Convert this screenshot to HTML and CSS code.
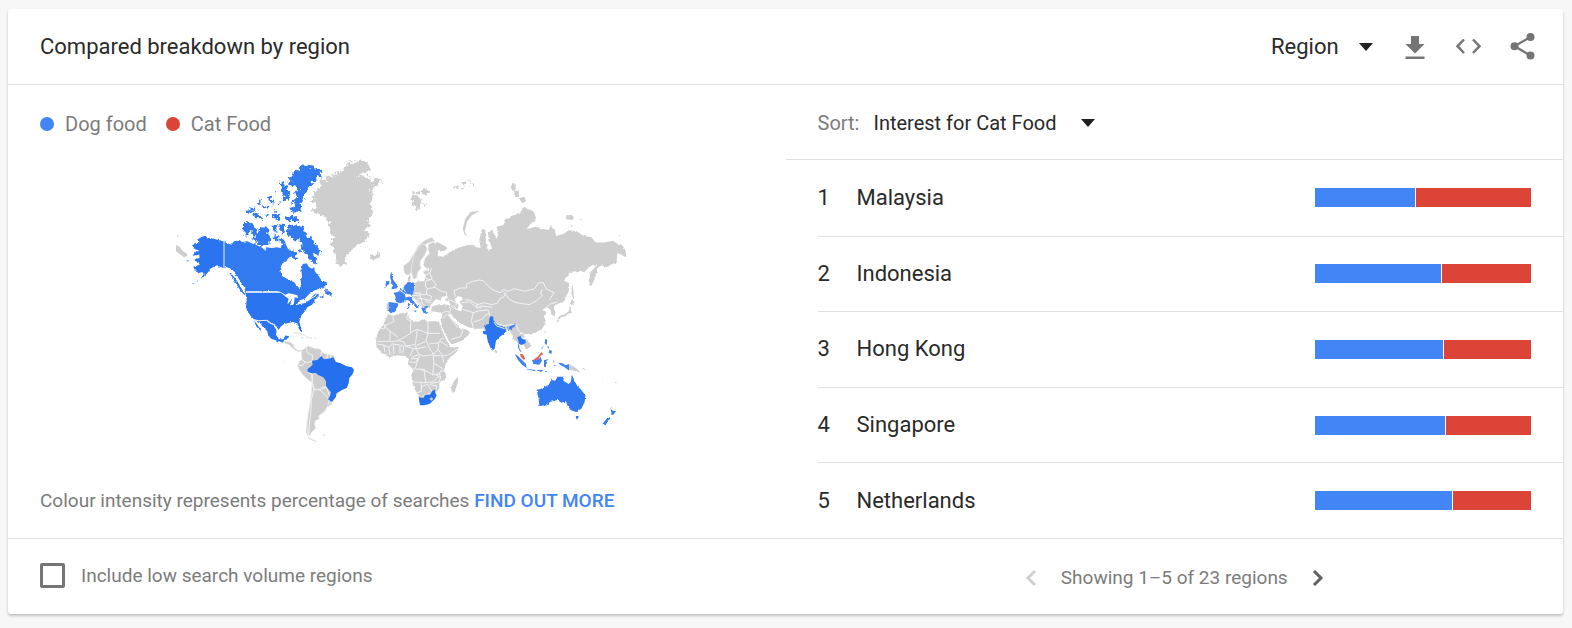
FILE: index.html
```html
<!DOCTYPE html>
<html lang="en-GB">
<head>
<meta charset="utf-8">
<meta name="viewport" content="width=device-width, initial-scale=1">
<title>Compared breakdown by region</title>
<link rel="stylesheet" href="styles.css">
</head>
<body>
<main class="card">
  <header class="card-header">
    <h1 class="title">Compared breakdown by region</h1>
    <div class="tools">
      <span class="picker picker-region">
        <select class="select" aria-label="Resolution"><option>Region</option></select>
        <svg class="caret" viewBox="0 0 14 8" aria-hidden="true"><path d="M0 0h14L7 8z"/></svg>
      </span>
      <button class="icon-button" type="button" aria-label="Download CSV"><svg viewBox="0 0 32 32"><path d="M12 5h8v8h5.500L16 22.500 6.500 13H12zM6.500 25.500h19V28h-19z"/></svg></button>
      <button class="icon-button" type="button" aria-label="Embed"><svg viewBox="0 0 32 32"><path class="line" d="M11 8.500 4.500 15.200 11 22M20 8.500l6.500 6.700L20 22"/></svg></button>
      <button class="icon-button" type="button" aria-label="Share"><svg viewBox="0 0 32 32"><path class="wire" d="M23.500 6 7.500 15.200l16 9.300"/><circle cx="23.500" cy="6" r="4"/><circle cx="7.500" cy="15.200" r="4"/><circle cx="23.500" cy="24.500" r="4"/></svg></button>
    </div>
  </header>

  <div class="content">
    <section class="map-panel">
      <ul class="legend">
        <li class="legend-item"><span class="dot dog"></span>Dog food</li>
        <li class="legend-item"><span class="dot cat"></span>Cat Food</li>
      </ul>
      <svg class="map" viewBox="170 155 462 290" role="img" aria-label="World map of interest by region">
        <defs>
          <filter id="rough" x="-5%" y="-5%" width="110%" height="110%" color-interpolation-filters="sRGB">
            <feTurbulence type="fractalNoise" baseFrequency="0.09" numOctaves="2" seed="4" result="n"/>
            <feDisplacementMap in="SourceGraphic" in2="n" scale="24" xChannelSelector="R" yChannelSelector="G"/>
          </filter>
          <filter id="coast" x="-5%" y="-5%" width="110%" height="110%" color-interpolation-filters="sRGB">
            <feTurbulence type="fractalNoise" baseFrequency="0.1" numOctaves="2" seed="7" result="n"/>
            <feDisplacementMap in="SourceGraphic" in2="n" scale="8" xChannelSelector="R" yChannelSelector="G"/>
          </filter>
        </defs>

        <!-- Greenland, Iceland, Svalbard, Scandinavia -->
        <g transform="translate(300 150) scale(.33333)" class="none">
          <g filter="url(#rough)">
            <path d="M24 156L44 146 34 138 50 124 60 104 66 84 76 94 84 78 98 82 96 70 110 80 104 62 122 76 118 58 132 68 130 50 150 38 170 30 192 34 208 46 212 62 186 68 172 80 196 76 206 88 214 78 212 100 226 84 246 88 240 102 222 110 214 122 220 140 212 160 220 180 214 196 204 212 208 228 194 236 206 250 200 270 184 280 166 290 148 306 138 322 130 350 116 350 106 330 102 300 94 280 98 258 92 244 84 214 70 194 44 190 30 182 46 176 54 162z"/>
            <path d="M206 312l10 8 8-8 12-4 4 12-14 10-14-6z"/>
            <path d="M332 130l14 4 6-8 6 14 6 14-10 28-8-14-10-18zM362 122l16-6 12 8-12 12-12-4zM370 158l8 10-6 2zM460 110l10-4 4 6-8 4zM484 100l10-6 8 2-6 8zM508 100l14 0-6 8zM482 114l12 2-8 4zM506 84l4 4-4 4z"/>
          </g>
          <path d="M540 182l-24 14-14 18-8 30 6 14 14 14-8-8-12-10-6-18 8-30 16-20z"/>
          <path class="edge" d="M310 348l18-14 16-28 12-20 20-16 20-8 8 12-10 2-12 4-12 8-14 22-10 22-6 20-8 18-12 6-8-10z"/>
          <path class="edge" d="M376 284l6 14-8 18-12 16-2 14 4 8-10 12-4 18-10 4-6-20 0-16 10-42 12-18 10-10z"/>
          <path class="edge" d="M386 282l14-6 4 24 4 28-8 20-20 8-10-10 4-20 14-16-4-14z"/>
        </g>

        <!-- Alaska, Canada and the Arctic islands -->
        <g transform="translate(160 150) scale(.33333)" class="canada">
          <path class="none" d="M48 284l12 8 8 12 12 6 2 8-10 4-10-8-14-10zM50 256l6 2-4 4z"/>
          <g filter="url(#rough)">
            <path d="M384 88L396 72 412 58 436 46 460 50 484 68 474 84 456 100 440 120 432 140 424 166 420 186 402 184 388 176 406 168 398 152 412 144 402 130 420 118 396 108 382 98 398 92z"/>
            <path d="M362 94l14 10 6 14 8 14-4 18-14 4-2-18-8-14zM372 198l18 4 22-4 6 14-34 2zM388 184l16-2-4 8z"/>
            <path d="M382 228l18-4 28 8 8 20 20 14 10 18 14 16-4 14-16-2 12 22-8 8-20-20-6-20-14 4-4-12 8-12-12-14-12 0-12-4-12-12z"/>
            <path d="M276 234l16 8 14-10 18 2 2 22 8 12-10 18-24-6-20-4-4-10 12-6-10-10z"/>
            <path d="M252 216l26 4 2 14-16 18-14 2 2-18z"/>
            <path d="M338 226l14 0 0 20-12-2zM358 222l16 4-4 26-12-10zM340 252l14 8 2 14-14-4zM260 184l12-8 12-4-6 12-16 10zM282 188l16 6 10 12-22 2-8-12zM292 156l14-8-4 14zM324 140l10 4 10 14-6 8-12-12zM342 176l10 8-8 6zM350 158l10-4-4 12zM342 192l16 4-2 18-14-6zM308 172l10-6 2 12zM344 122l4 6-4 4zM318 190l10 4-6 8zM378 292l10 0 0 12zM428 296l14 8 2 12-14-8z"/>
            <path d="M396 296l16 12-4 16-14 2z"/>
          </g>
          <g filter="url(#coast)">
            <path class="usa" d="M96 285l12-3 10-4-6-10 12-6 10-5 12 7 14 2 16 4 20 5v80l-13-3-12-6-12 6-10 6-6 10-10 10-12 10 10-16-4-6-12 4-10-14-6-6 20-6-4-8-14-4 6-6 12-2-2-10-18 4 8-12 12-4-14-4z"/>
            <path class="usa" d="M94 402l10-4-2 3zM108 394l10-4-4 5zM78 330l10 2-4 2zM142 362l8-4-2 8z"/>
            <path d="M191 275l23 9 8-10 16-4 8 6 16-2 18 8 16 6 12 6 8 10 4-12 14 2 16-2 12 2 4-12-8-6 6-12 10 8 4 12 6 12 6 8 10-2 4 12-14 6-10 10-14 12-6 16 6 20 18 10 18 8 6 8 8 14 8-14-6-12 8-14-2-18 4-18 12-2 6 10 10 6 6-4 4 14 10 12 8 12 18 8-8 12-14 4-16 8-16 10-14 14-30 10-28-20-14-10-10-2H258l-6-14-10-14-12-20-18-20-20-7z"/>
            <path d="M496 414l8 8 12 6-2 10-18-6zM456 440l12-10 10 4-12 12-12 8-6-2zM480 442l12-6-4 8zM208 368l6 2 18 24 12 20 10 18-4 0-14-18-12-20zM486 412l10-2-8 6z"/>
          </g>
          <path class="border" d="M192 272v84"/>
        </g>

        <!-- USA, Mexico, Central and South America -->
        <g transform="translate(220 280) scale(.33333)">
          <g filter="url(#coast)">
            <path class="usa" d="M76 36h106l12 10 10-4 12 0 6 10-8 10-4 14 10-2 4-18 12 2 4 8-8 8 20-4 18-10 10-4 4 8-8 10-14 8-6 10-8 10-8 16-2 8 6 20-2 10-8-16-2-10-14-4-16 4-10 2-10 8-6 10-10-16-12-4-8-8-28 2-14-4-10-10-12-16-4-12 2-24z"/>
            <path class="usa" d="M116 122l24-2 10 8 10 6 10 18-2 12 8 14 12 0 8-10 12-4-4 14-12 2-2 8-16-4-20-8-10-10-2-12-14-14zM102 120l10 14 14 20-4-2-14-14z"/>
          </g>
          <path class="border" d="M78 37h104l12 8M228 74l34-12 24-14 8-16 14 0M98 118l16 4 28-1 8 9 12 3 8 14"/>
          <path class="lake" d="M192 46l14-6 12 2 14 4 2 8-10-2-2 18-6 4 0-18-10 14-4 2 4-16-12-8zM234 66l16-4-6 6-10 4z"/>
          <path class="lake" d="M226 0l6 18 10 4 0-22z"/>
          <g class="none">
            <path class="edge" d="M194 182l18 5 9 7 2 9 13 9 10-4 0 5-12 3-16-11-10-10-15-6z"/>
            <path class="faint" d="M222 158l16 1 16 8M258 170l18 5M284 174l4 1M242 172l8 2M192 245l2 1M308 466l8-2"/>
            <path class="edge" d="M244 212l14-10 8-4 14 6 20 3 9 11 11 4 20 4 4 10-8 20-20 30 5 20 10 20 4 40 0 8-13 6-6 12-12 10-8 6 2 10-12 4-2 12 4 10-12 12-6 12-8-6 0-32 2-26 6-34 4-30 2-32-14-10-14-14-12-18-4-10 6-12 8-6-2-10z"/>
            <path class="faint" d="M262 420l-2 36 6 18 16 8 8 2M262 440l-4 18M268 474l10 8"/>
            <path class="border" d="M258 202l4 16 16 8-2 18M246 240l14 8 18-4M234 254l12 4 10-12M264 278l12 4 2 22M276 282l0 24 8 24 20-2 18-8M276 306l6 22-8 30-2 40-4 40-2 30M296 328l22 18 10 14-4 14M306 210l-4 20M322 222l0 12M334 224l-4 12M302 324l16-4 10 26"/>
          </g>
          <path class="brazil" d="M262 268l8-6 8-8-2-12 16-2 12-12 8 10 14-2 14-4 8 14 14 4 16 8 18 4 6 8-4 12-10 12-2 16-6 14-14 6-16 10-2 10-12 16-12-8 6-10 2-12-8-10-6-8 0-14-8-12-14-6-10-8-10 2-12-4z"/>
        </g>

        <!-- Europe, Asia and Africa -->
        <g transform="translate(360 240) scale(.33333)">
          <g class="none">
            <g filter="url(#coast)">
              <path d="M222 6L240 10 260 22 258 32 240 34 230 30 234 48 250 50 264 40 280 30 300 22 320 16 336 14 350 22 362 24 358 0 366-34 376-30 378 10 384 30 396 26 388 0 384-20 396-30 404-14 416 0 410-40 430-44 436-64 460-74 478-78 492-100 504-92 522-86 528-64 508-44 500-32 526-40 550-34 566-30 572-42 584-32 588-12 610-18 628-30 650-26 672-12 696-8 706 8 740 6 760 2 776 14 788 18 798 34 798 52 780 42 772 40 770 68 756 72 740 82 724 76 712 84 710 100 700 126 692 140 686 120 692 96 714 72 696 76 676 92 650 94 630 96 612 122 628 130 626 154 610 186 592 192 580 202 586 216 584 228 574 224 572 210 562 202 546 210 560 216 552 228 558 246 546 268 526 278 506 282 490 286 510 308 512 320 500 328 490 314 480 300 474 290 476 316 470 304 462 300 454 280 446 268 436 272 420 284 384 290 370 266 350 266 324 262 296 246 284 236 270 222 250 226 244 218 216 214 214 200 240 192 272 196 266 184 254 180 264 168 246 170 242 182 232 178 222 182 216 192 208 204 198 208 192 200 184 202 172 184 160 172 156 160 160 130 176 124 194 124 198 106 190 98 196 92 208 90 206 80 218 70 212 40 214 14z"/>
              <path d="M458-172l8 4 2 16-10 6-6-12zM462-148l14 0 2 16-12 6zM480-126l14-4 4 14-10 6-6-6zM618-74l10 0 14 4-4 10-18-2zM656-64l8 2 2 4zM776-16l6 2-4 3zM632-44l6 2-4 3z"/>
              <path d="M636 130l4 20 2 28-4-2-4-24zM636 178l8 8-8 10-6-6zM632 198l2 18-14 12-18 4-10 8 6-12 18-6 10-8zM590 242l8-4-4 10zM554 270l4 10-4 0z"/>
              <path d="M84 222l14 6 24-8 22-2 2 16 8 6 22 6 10-8 20 6 30 0 4 8 10 28 12 26 8 16 26-2-6 16-22 18-12 20-4 18 6 10-2 14-18 14 0 14-14 16-34 20-12-6-10-20-10-22-4-28 6-14-12-14-4-20-8-8-28-2-18 6-20-10-20-20-2-16 4-28 16-22 10-20z"/>
              <path d="M248 222l16 0 18 22 18 18 10 4 16 6 2 10-18 18-36 14-12-20-16-32-4-22z"/>
              <path d="M294 410l0 16-10 30-10 2 0-18 8-16zM404 328l8 6-2 6-6-4zM80 190l7 0-1 24-6-2zM148 104l4 6-2 16-6-4 0-14z"/>
            </g>
            <path class="lake" d="M284 178l10-10 12 4 2 8-10 4 10 14-4 16-12-4 4-14-8-10z"/>
            <path class="border" d="M196 106l14-8 6-14M196 114l16 6 4-6-6-14M198 124l-2 14 6 8M194 124l22-6 12 16-8 10M202 146l24-4 14 10 20 6 0 12M162 132l-2 24 20 8 18 0 4-18M160 156l-6 16M180 164l4 12 28 6 2-10M172 176l14 0M184 176l4 18 12 6M196 184l16 4M166 160l18-2M160 166l20 2M200 162l16 8M170 180l10 8 4 14"/>
            <path class="border" d="M286 170l-4-18 18-8 20 0 0-12 18-8 22-4 12 4 12 14 18 14 20 6 8-10 14 6 18-8 32 8 30-8 12-18 14 0 8 18 24 12-14 22"/>
            <path class="border" d="M438 158l-6 12-12 6-8 14-18 4-20-6-22 6-22-14-16 0M430 154l18 24 20 10 40 6 22-12 18-16-6-4 4-14M306 188l24-2 22 18 14-6 30 4M352 190l-2 10 14 4M340 218l18-6 26-2 6 18M308 208l32 10-6 24 6 22M340 246l26-8 12-14 12-4M264 178l26 10-2 8M272 196l8 8 14 6M268 196l4 14-6 16 22 24M246 218l14-4 8 2M280 196l10 10M390 228l14 20 28 10 20-4 18 0 4 16 14 14M402 244l8 10 24 8M452 262l16-8M478 282l10-4 12 14 8 18M484 290l16 14"/>
            <path class="border" d="M262 222l-14 14M264 224l30 40M274 298l28-8 6-18M302 268l8 0M554 206l16-14 22-6"/>
            <path class="border" d="M98 230l4 14-28 14M74 252l0 14-20 0M74 260l40 32M90 272l0 32-38 0M144 220l-4 16 12 8 0 36-38 22-24 4M152 244l2-6M204 244l0 36-32-12-20 8M204 280l36 0M204 280l-6 24-28 12M172 270l-6 44-30 4-4-12-18-4M52 312l20 4 2 20M72 316l12 6 14-10 16 2 18 4-4 22M86 322l4 22M100 316l2 26M120 318l0 22M136 318l24 8-10 22M160 326l14 0 24-6M166 316l10 28-22 8M176 344l16 4 28-4M200 304l8 20 12 18M208 312l28-4 8-12 8 0M236 308l-2 22-14 12M240 304l24 14M234 330l16 18 16-4M266 344l24-16M220 344l2 26 26 16M222 346l26 2 2 20M222 370l-4 34-14-8-24-8-22-2M178 348l-12 36M176 388l18 0 0 20 4 20-38-2M194 428l22-2 22-16-16-8M184 430l0 24-14 4M186 440l16-8 16 26-22 6-10 6M218 404l20-2 6-12M212 430l26-4 4-16M210 434l20 4-4 18M244 392l14 2M154 356l22 0M148 366l18 2 8-12M230 408l8-10 4 18"/>
          </g>

          <g class="europe" filter="url(#coast)">
            <path d="M92 98l8 6-2 12 8 12 8 12-6 6-16 2 6-10-6-6 2-10-4-8zM78 124l10-2 0 14-12 4z"/>
            <path d="M100 158l14-2 8-10 16 12 0 10-2 18-16 4-12-4-2-18z"/>
            <path d="M86 186l30 4-4 12-8 14-12 4-6-6z"/>
            <path d="M134 136l12-10 16 2 0 22-4 14-16-2-14-8z"/>
            <path d="M138 172l20-4-2 10 14 16 8 6-8 6-8-10-12-12-12-4zM158 210l12 2-6 6zM144 190l4 2 0 16-4-2zM184 204l14-6 8 0-10 8 6 16-12-4z"/>
          </g>
          <path class="border" d="M118 150l18 12 2 10M104 186l16 5M131 148l6 8"/>
          <path class="brazil" d="M176 472l14 2 6-10 14 0 6-10 10-6 0 12 4 6-6 12-16 14-16 4-12 0z"/>
          <path class="none" d="M208 477l6-5 6 4-5 6z"/>
          <g filter="url(#coast)">
            <path class="usa" d="M372 256l14-4 2-16 4-8 8 2 0 10 12 14 20 8 6 8-4 10-14 10-12 12-4 24-8 6-8-16-6-18-2-14-10-2 0-8 8-2z"/>
            <path class="europe" d="M442 262l16-6 10-4-4 8-8 4 2 8-6-4-8 2z"/>
          </g>
          <path class="border" d="M402 246l8 12 24 8"/>
          <path class="usa" d="M472 291l10-3 3 8 12 4 0 9-13 6-7-4 1 14 7 12-5-3-6-12 2-14z"/>
        </g>

        <!-- South-east Asia and Oceania -->
        <g transform="translate(470 280) scale(.33333)">
          <g class="europe">
            <path d="M134 222l10 6 24 24 2 12-14-10-12-14zM170 266l26 4 0 4-26-6zM202 270l16 0 0 3-16 0zM186 240l20-2 6-8 4 12-8 12-18-2zM222 240l14-2-8 6 4 6-4 2 0 10-6-2zM250 240l4 8-4-2zM264 248l14 2 8 6 12-4 0 20-14-10-12-6zM226 176l6 4-2 16-6-6zM238 210l8 2-2 10-8-4zM232 198l6 2-4 6zM214 206l8-10-6 12zM206 272l10 1-4 3zM224 274l10-2-8 5zM250 256l12 1-8 2z"/>
          </g>
          <path class="malaysia" d="M150 221l9 2 7 14-6 2-8-9zM190 239l13-9 11-14 6 7-9 4-6 12-10 2z"/>
          <g filter="url(#coast)">
            <path class="none" d="M300 254l18 10 16 16-14-6-20-4zM334 266l12-4-6 6zM396 298l4 2-4 0zM434 306l8 2-6 2z"/>
            <path class="australia" d="M200 330l14-4 22-12 8-14 12 2 6-12 20 0-2 12 16 10 6-6 4-22 8 20 8 14 12 12 12 16-2 20-10 20-16 10-16-6-10-14-4-12-14 4-12-8-22 6-14 10-18 2-2-22zM316 408l10 0-5 12zM420 380l4 6 4 6 10 2-8 10-6 0 0-8zM398 432l10-14 10-8 2 6-10 14-6 4z"/>
          </g>
        </g>
      </svg>
      <p class="caption">Colour intensity represents percentage of searches <a class="more" href="#more">FIND OUT MORE</a></p>
    </section>

    <section class="list-panel">
      <div class="sort">
        <label class="sort-label" for="sort">Sort:</label>
        <span class="picker picker-sort">
          <select class="select" id="sort"><option>Interest for Cat Food</option></select>
          <svg class="caret" viewBox="0 0 14 8" aria-hidden="true"><path d="M0 0h14L7 8z"/></svg>
        </span>
      </div>
      <ol class="regions">
        <li class="region"><span class="rank">1</span><span class="name">Malaysia</span><span class="bar"><span class="dog" style="width:46.5%"></span><span class="cat rest"></span></span></li>
        <li class="region"><span class="rank">2</span><span class="name">Indonesia</span><span class="bar"><span class="dog" style="width:58.5%"></span><span class="cat rest"></span></span></li>
        <li class="region"><span class="rank">3</span><span class="name">Hong Kong</span><span class="bar"><span class="dog" style="width:59.2%"></span><span class="cat rest"></span></span></li>
        <li class="region"><span class="rank">4</span><span class="name">Singapore</span><span class="bar"><span class="dog" style="width:60.1%"></span><span class="cat rest"></span></span></li>
        <li class="region"><span class="rank">5</span><span class="name">Netherlands</span><span class="bar"><span class="dog" style="width:63.5%"></span><span class="cat rest"></span></span></li>
      </ol>
    </section>
  </div>

  <footer class="card-footer">
    <label class="low-volume"><input class="checkbox" type="checkbox">Include low search volume regions</label>
    <nav class="pager" aria-label="Pages">
      <button class="page-button" type="button" aria-label="Previous" disabled><svg viewBox="0 0 12 18"><path d="M10 2 3 9l7 7"/></svg></button>
      <span>Showing 1–5 of 23 regions</span>
      <button class="page-button" type="button" aria-label="Next"><svg viewBox="0 0 12 18"><path d="m2 2 7 7-7 7"/></svg></button>
    </nav>
  </footer>
</main>
</body>
</html>
```
FILE: styles.css
```css
* { box-sizing: border-box; }

body {
  margin: 0;
  padding: 9px 9px 14px 8px;
  background: #f7f7f7;
  color: #2a2a2a;
  font-family: Roboto, "Liberation Sans", sans-serif;
  font-size: 22px;
  line-height: 28px;
}

.card {
  background: #fff;
  border-radius: 3px;
  box-shadow: 0 2px 3px rgba(0, 0, 0, .22);
}

.card-header {
  display: flex;
  justify-content: space-between;
  align-items: center;
  height: 76px;
  padding: 0 24px 0 32px;
  border-bottom: 1px solid #e0e0e0;
}

.title { margin: 0; font-size: 22px; font-weight: 400; }

.tools { display: flex; align-items: center; gap: 22px; }

.picker { display: flex; align-items: center; }
.picker-region { gap: 20px; margin-right: 4px; }
.picker-sort { gap: 24px; font-size: 20px; }

.select {
  appearance: none;
  border: 0;
  padding: 0;
  background: none;
  color: inherit;
  font: inherit;
}

.caret { width: 14px; height: 8px; fill: #212121; }

.icon-button {
  width: 32px;
  height: 32px;
  padding: 0;
  border: 0;
  background: none;
}

.icon-button svg { display: block; fill: #757575; }
.icon-button .line { fill: none; stroke: #757575; stroke-width: 2.5; }
.icon-button .wire { fill: none; stroke: #757575; stroke-width: 2.2; }

.content { display: grid; grid-template-columns: 1fr 1fr; }

.map-panel {
  display: flex;
  flex-direction: column;
  align-items: center;
  padding: 25px 32px 23px;
  color: #7c7c7c;
}

.legend {
  display: flex;
  align-self: stretch;
  gap: 19px;
  margin: 0;
  padding: 0;
  list-style: none;
  font-size: 20px;
}

.legend-item { display: flex; align-items: center; gap: 11px; }
.dot { width: 14px; height: 14px; border-radius: 50%; }
.dog { background: #4285f4; }
.cat { background: #db4437; }

.map { width: 462px; max-width: 100%; margin: 17px 0 42px 8px; }

.none { fill: #cecece; }
.canada { fill: #327aef; }
.usa { fill: #2a75ef; }
.brazil { fill: #2470ee; }
.europe { fill: #4083ef; }
.australia { fill: #3079f0; }
.malaysia { fill: #e0655a; }
.lake { fill: #fff; }
.edge { stroke: #f2f2f2; stroke-width: 2; }
.border { fill: none; stroke: #f0f2f6; stroke-width: 3; }
.faint { fill: none; stroke: #dcdcdc; stroke-width: 3; }

.caption { align-self: stretch; margin: 0; font-size: 19px; }
.more { color: #4285f4; font-weight: 500; text-decoration: none; }

.list-panel { display: flex; flex-direction: column; }

.sort {
  display: flex;
  align-items: center;
  gap: 14px;
  height: 75px;
  padding: 2px 0 0 32px;
  border-bottom: 1px solid #e0e0e0;
}

.sort-label { color: #7c7c7c; font-size: 20px; }

.regions {
  display: grid;
  grid-auto-rows: 1fr;
  flex: 1;
  margin: 0;
  padding: 0 0 0 32px;
  list-style: none;
}

.region { display: flex; align-items: center; padding-right: 32px; }
.region + .region { border-top: 1px solid #e0e0e0; }

.rank { width: 39px; }
.name { flex: 1; }
.bar { display: flex; gap: 1px; width: 216px; height: 19px; }
.rest { flex: 1; }

.card-footer {
  display: grid;
  grid-template-columns: 1fr 1fr;
  align-items: center;
  height: 76px;
  border-top: 1px solid #e0e0e0;
  color: #7c7c7c;
  font-size: 19px;
}

.low-volume {
  display: flex;
  align-items: center;
  gap: 16px;
  padding: 0 0 2px 32px;
}

.checkbox {
  appearance: none;
  width: 25px;
  height: 25px;
  margin: 0;
  border: 3px solid #757575;
  border-radius: 2px;
}

.pager {
  display: flex;
  justify-content: center;
  align-items: center;
  gap: 24px;
  padding-top: 2px;
}

.page-button {
  width: 12px;
  height: 18px;
  padding: 0;
  border: 0;
  background: none;
}

.page-button svg { display: block; fill: none; stroke: #616161; stroke-width: 3; }
.page-button:disabled svg { stroke: #d0d0d0; }
```
